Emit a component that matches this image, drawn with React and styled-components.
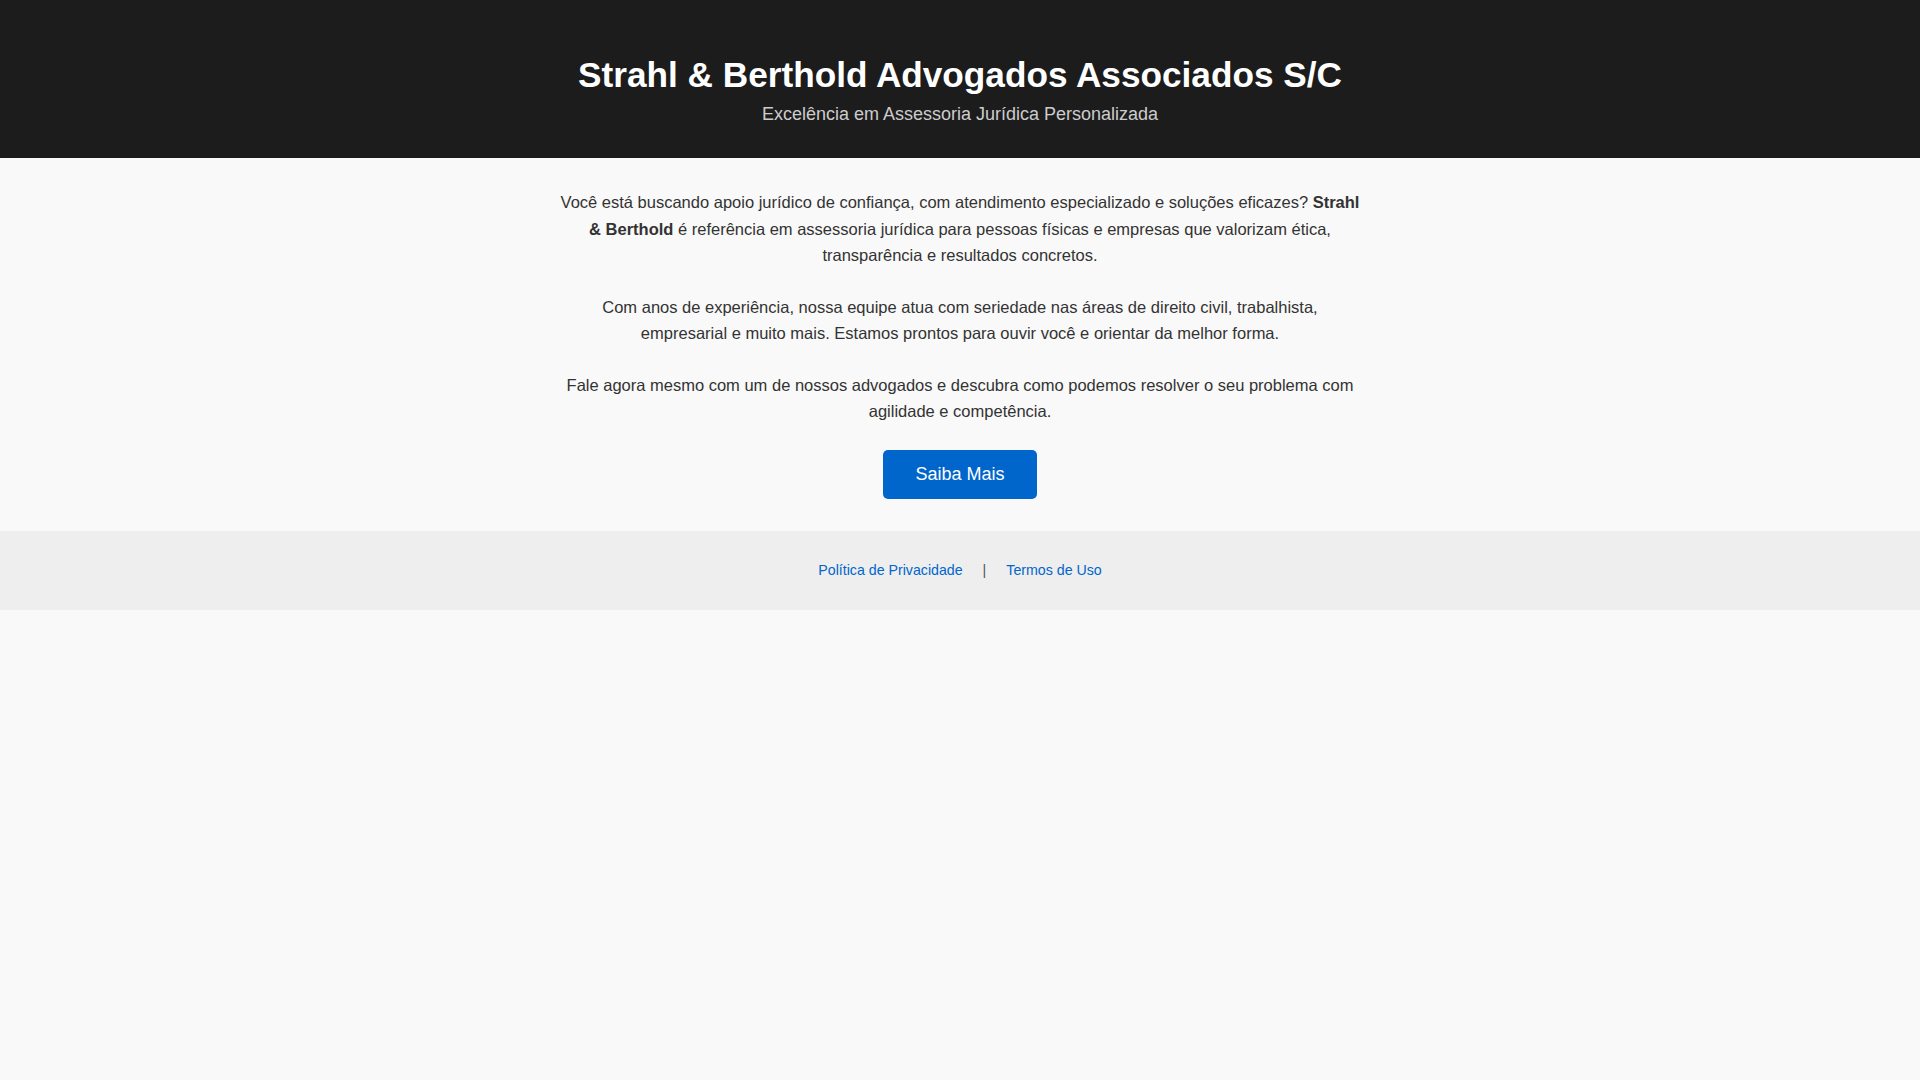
import React from "react";
import styled, { createGlobalStyle } from "styled-components";

const GlobalStyle = createGlobalStyle`
  html, body {
    margin: 0;
    padding: 0;
    background: #f9f9f9;
    font-family: "Liberation Sans", Arial, sans-serif;
    color: #333;
  }
`;

function App() {
  return (
    <>
      <GlobalStyle />
      <Header>
        <Title>Strahl &amp; Berthold Advogados Associados S/C</Title>
        <Tagline>Excelência em Assessoria Jurídica Personalizada</Tagline>
      </Header>
      <Main>
        <Text>
          Você está buscando apoio jurídico de confiança, com atendimento
          especializado e soluções eficazes? <strong>Strahl &amp; Berthold</strong> é
          referência em assessoria jurídica para pessoas físicas e empresas que
          valorizam ética, transparência e resultados concretos.
        </Text>
        <Text>
          Com anos de experiência, nossa equipe atua com seriedade nas áreas de
          direito civil, trabalhista, empresarial e muito mais. Estamos prontos
          para ouvir você e orientar da melhor forma.
        </Text>
        <Text>
          Fale agora mesmo com um de nossos advogados e descubra como podemos
          resolver o seu problema com agilidade e competência.
        </Text>
        <Button href="#">Saiba Mais</Button>
      </Main>
      <Footer>
        <FooterLink href="#">Política de Privacidade</FooterLink>
        <Separator>|</Separator>
        <FooterLink href="#">Termos de Uso</FooterLink>
      </Footer>
    </>
  );
}

export default App;

const Header = styled.header`
  background: #1c1c1c;
  color: #fff;
  text-align: center;
  padding: 55px 20px 33px;
`;

const Title = styled.h1`
  margin: 0 0 9px;
  font-size: 35.2px;
  font-weight: bold;
  line-height: 1.15;
`;

const Tagline = styled.p`
  margin: 0;
  font-size: 18px;
  line-height: 1.15;
  color: #ccc;
`;

const Main = styled.main`
  max-width: 800px;
  margin: 0 auto;
  padding: 31px 20px 32px;
  text-align: center;
`;

const Text = styled.p`
  margin: 0 0 25.4px;
  font-size: 16.5px;
  line-height: 1.6;
  color: #333;
`;

const Button = styled.a`
  display: inline-block;
  background: #0066cc;
  color: #fff;
  text-decoration: none;
  font-size: 18px;
  line-height: 1.15;
  padding: 14px 32px;
  border-radius: 5px;
`;

const Footer = styled.footer`
  background: #eee;
  padding: 32px 20px;
  text-align: center;
  font-size: 14.2px;
  line-height: 1.1;
`;

const FooterLink = styled.a`
  color: #0066cc;
  text-decoration: none;
  margin: 0 16px;
`;

const Separator = styled.span`
  color: #555;
  padding: 0 4px;
`;
